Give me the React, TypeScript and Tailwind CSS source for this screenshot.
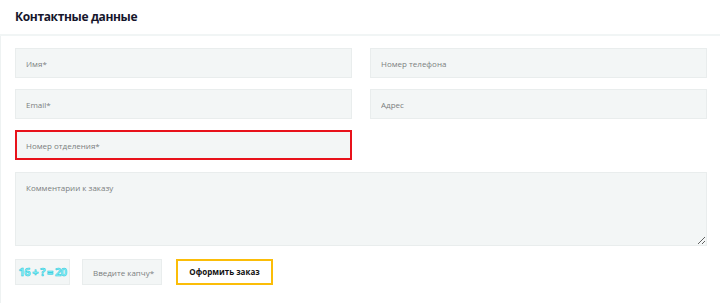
const inputCls =
  "h-[30px] w-full bg-[#f3f6f6] border border-[#e9eded] px-[10px] text-[8px] text-[#555] outline-none placeholder:text-[#7b8080]";

const App = () => {
  return (
    <div className="w-[720px] h-[303px] bg-white overflow-hidden" style={{ fontFamily: '"Open Sans", sans-serif' }}>
      {/* Header */}
      <div className="h-[36px] border-b-2 border-[#f1f5f5] flex items-center px-[15px]">
        <h2 className="text-[12px] font-bold text-[#16162b] tracking-[-0.35px]">Контактные данные</h2>
      </div>

      {/* Form */}
      <div className="border-l border-[#eef2f2] pl-[14px] pr-[13px] pt-[12px] h-[267px]">
        <div className="grid grid-cols-2 gap-x-[18px] gap-y-[11px]">
          <input className={inputCls} placeholder="Имя*" />
          <input className={inputCls} placeholder="Номер телефона" />
          <input className={inputCls} placeholder="Email*" />
          <input className={inputCls} placeholder="Адрес" />
          <input
            className="h-[30px] w-full bg-[#f3f6f6] border-2 border-[#e8121b] px-[9px] text-[8px] outline-none placeholder:text-[#7b8080]"
            placeholder="Номер отделения*"
          />
          <div />
        </div>

        <textarea
          className="mt-[12px] block w-full h-[74px] bg-[#f3f6f6] border border-[#e9eded] px-[10px] py-[9px] text-[8px] outline-none placeholder:text-[#7b8080]"
          placeholder="Комментарии к заказу"
        />

        <div className="flex items-center mt-[13px]">
          <div className="w-[55px] h-[26px] bg-[#f3f6f6] border border-[#e9eded] flex items-center justify-center">
            <span
              className="text-[11px] font-bold text-[#8ef3f9] tracking-[-0.6px]"
              style={{ WebkitTextStroke: "0.5px #22c6da" }}
            >
              16 + ? = 20
            </span>
          </div>
          <input
            className="ml-[12px] w-[80px] h-[26px] bg-[#f3f6f6] border border-[#e9eded] pl-[10px] pr-[2px] text-[8px] outline-none placeholder:text-[#7b8080]"
            placeholder="Введите капчу*"
          />
          <button className="ml-[14px] w-[97px] h-[26px] bg-white border-2 border-[#fbbd08] text-[8px] font-bold text-[#111]">
            Оформить заказ
          </button>
        </div>
      </div>
    </div>
  );
};

export default App;
